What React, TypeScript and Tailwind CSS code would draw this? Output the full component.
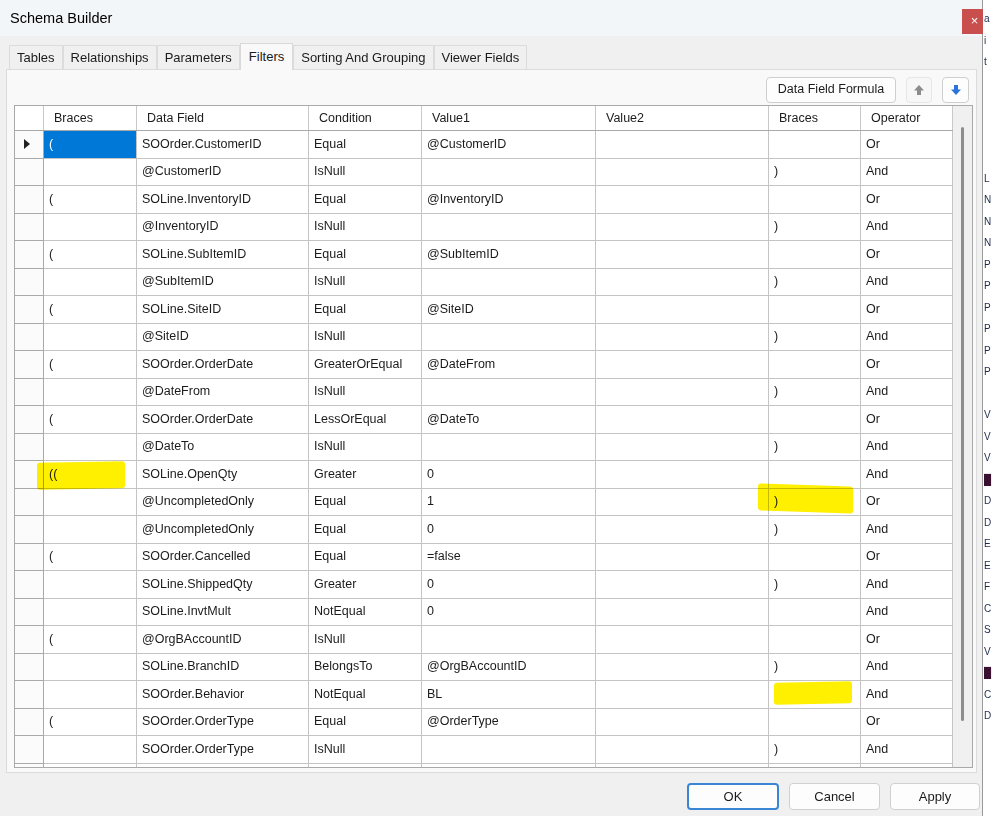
import React from 'react';

type Row = [string, string, string, string, string, string, string];

const ROWS: Row[] = [
  ['(', 'SOOrder.CustomerID', 'Equal', '@CustomerID', '', '', 'Or'],
  ['', '@CustomerID', 'IsNull', '', '', ')', 'And'],
  ['(', 'SOLine.InventoryID', 'Equal', '@InventoryID', '', '', 'Or'],
  ['', '@InventoryID', 'IsNull', '', '', ')', 'And'],
  ['(', 'SOLine.SubItemID', 'Equal', '@SubItemID', '', '', 'Or'],
  ['', '@SubItemID', 'IsNull', '', '', ')', 'And'],
  ['(', 'SOLine.SiteID', 'Equal', '@SiteID', '', '', 'Or'],
  ['', '@SiteID', 'IsNull', '', '', ')', 'And'],
  ['(', 'SOOrder.OrderDate', 'GreaterOrEqual', '@DateFrom', '', '', 'Or'],
  ['', '@DateFrom', 'IsNull', '', '', ')', 'And'],
  ['(', 'SOOrder.OrderDate', 'LessOrEqual', '@DateTo', '', '', 'Or'],
  ['', '@DateTo', 'IsNull', '', '', ')', 'And'],
  ['((', 'SOLine.OpenQty', 'Greater', '0', '', '', 'And'],
  ['', '@UncompletedOnly', 'Equal', '1', '', ')', 'Or'],
  ['', '@UncompletedOnly', 'Equal', '0', '', ')', 'And'],
  ['(', 'SOOrder.Cancelled', 'Equal', '=false', '', '', 'Or'],
  ['', 'SOLine.ShippedQty', 'Greater', '0', '', ')', 'And'],
  ['', 'SOLine.InvtMult', 'NotEqual', '0', '', '', 'And'],
  ['(', '@OrgBAccountID', 'IsNull', '', '', '', 'Or'],
  ['', 'SOLine.BranchID', 'BelongsTo', '@OrgBAccountID', '', ')', 'And'],
  ['', 'SOOrder.Behavior', 'NotEqual', 'BL', '', '', 'And'],
  ['(', 'SOOrder.OrderType', 'Equal', '@OrderType', '', '', 'Or'],
  ['', 'SOOrder.OrderType', 'IsNull', '', '', ')', 'And'],
  ['', '', '', '', '', '', ''],
];

const HEADERS = ['Braces', 'Data Field', 'Condition', 'Value1', 'Value2', 'Braces', 'Operator'];
const COLS = 'grid grid-cols-[29px_93px_172px_113px_174px_173px_92px_92px]';

const TABS = ['Tables', 'Relationships', 'Parameters', 'Filters', 'Sorting And Grouping', 'Viewer Fields'];

// letters of the app window peeking out behind the dialog
const STRIP = ['L', 'N', 'N', 'N', 'P', 'P', 'P', 'P', 'P', 'P', '', 'V', 'V', 'V', '█', 'D', 'D', 'E', 'E', 'F', 'C', 'S', 'V', '█', 'C', 'D'];

const Arrow: React.FC<{ down?: boolean; color: string }> = ({ down, color }) => (
  <svg width="12" height="12" viewBox="0 0 12 12" className={down ? 'rotate-180' : ''}>
    <path d="M6 1 L11 6.5 L8 6.5 L8 11 L4 11 L4 6.5 L1 6.5 Z" fill={color} />
  </svg>
);

const App: React.FC = () => {
  return (
    <div
      className="w-[992px] h-[816px] flex overflow-hidden bg-[#f0f0f0] text-[#1b1b1b]"
      style={{ fontFamily: '"Liberation Sans", Arial, sans-serif' }}
    >
      {/* Dialog window */}
      <div className="w-[983px] h-full flex flex-col border-r border-[#9a9a9a] bg-[#f0f0f0]">
        {/* Title bar */}
        <div className="h-[36px] shrink-0 flex items-center justify-between bg-[#f3f6f9] pl-[10px]">
          <span className="text-[14.5px] text-black mt-[2px]">Schema Builder</span>
          <div className="w-[25px] h-[25px] mt-[6px] bg-[#c94f4f] flex items-center justify-center text-white text-[13px] mr-[-5px]">
            ×
          </div>
        </div>

        {/* Tabs */}
        <div className="flex items-end pl-[9px] h-[33px] shrink-0 pt-[7px]">
          {TABS.map((t) =>
            t === 'Filters' ? (
              <div
                key={t}
                className="h-[27px] px-[8px] mb-[-1px] relative z-10 bg-[#f9f9f9] border border-b-0 border-[#d9d9d9] text-[13px] flex items-start pt-[3px]"
              >
                {t}
              </div>
            ) : (
              <div
                key={t}
                className="h-[24px] px-[7px] bg-[#f0f0f0] border border-b-0 border-[#dcdcdc] text-[13px] flex items-center"
              >
                {t}
              </div>
            )
          )}
        </div>

        {/* Tab panel */}
        <div className="ml-[6px] w-[971px] h-[704px] shrink-0 bg-[#f9f9f9] border border-[#dcdcdc] flex flex-col px-[7px]">
          {/* Toolbar */}
          <div className="h-[35px] shrink-0 flex items-center justify-end gap-[10px] pt-[4px]">
            <button className="h-[26px] w-[130px] rounded-[4px] border border-[#cfcfcf] bg-[#fdfdfd] text-[12.5px]">
              Data Field Formula
            </button>
            <button className="h-[26px] w-[26px] rounded-[4px] border border-[#e6e6e6] bg-[#f7f7f7] flex items-center justify-center">
              <Arrow color="#8c8c8c" />
            </button>
            <button className="h-[26px] w-[27px] rounded-[4px] border border-[#cfcfcf] bg-[#fdfdfd] flex items-center justify-center">
              <Arrow down color="#2b73d8" />
            </button>
          </div>

          {/* Grid */}
          <div className="relative h-[663px] w-[959px] overflow-hidden border border-[#a9a9a9] bg-[#f0f0f0] flex">
            <div className="w-[938px] flex flex-col bg-white">
              <div className={`${COLS} h-[25px] shrink-0 border-b border-[#a9a9a9] bg-white text-[12.5px]`}>
                <div className="border-r border-[#c8c8c8]" />
                {HEADERS.map((h, i) => (
                  <div key={i} className="border-r border-[#c8c8c8] pl-[10px] flex items-center">
                    {h}
                  </div>
                ))}
              </div>
              {ROWS.map((r, ri) => (
                <div key={ri} className={`${COLS} h-[27.5px] shrink-0 text-[12.5px]`}>
                  <div className="border-r border-b border-[#a9a9a9] bg-[#fbfbfb] flex items-center pl-[9px]">
                    {ri === 0 && (
                      <svg width="6" height="10" viewBox="0 0 6 10">
                        <path d="M0 0 L6 5 L0 10 Z" fill="#222" />
                      </svg>
                    )}
                  </div>
                  {r.map((c, ci) => (
                    <div
                      key={ci}
                      className={`border-r border-b border-[#c4c4c4] flex items-center pl-[5px] ${
                        ri === 0 && ci === 0 ? 'bg-[#0078d7] text-white' : ''
                      }`}
                    >
                      {c}
                    </div>
                  ))}
                </div>
              ))}
            </div>
            {/* Scrollbar */}
            <div className="flex-1 bg-[#f0f0f0] flex justify-center pt-[21px]">
              <div className="w-[3px] h-[594px] bg-[#8e8e8e] rounded-full" />
            </div>

            {/* Yellow marker highlights */}
            <div className="absolute left-[22px] top-[356px] w-[88px] h-[27px] bg-[#fff000] mix-blend-multiply rounded-[3px] -skew-y-1" />
            <div className="absolute left-[743px] top-[379px] w-[95px] h-[27px] bg-[#fff000] mix-blend-multiply rounded-[3px] skew-y-[2deg]" />
            <div className="absolute left-[759px] top-[576px] w-[78px] h-[22px] bg-[#fff000] mix-blend-multiply rounded-[3px] -skew-y-1" />
          </div>
        </div>

        {/* Bottom buttons */}
        <div className="flex-1 flex items-start justify-end gap-[10px] pt-[10px] pr-[2px]">
          <button className="h-[27px] w-[92px] rounded-[4px] border-2 border-[#3b86d4] bg-[#fdfdfd] text-[13px]">OK</button>
          <button className="h-[27px] w-[91px] rounded-[4px] border border-[#d0d0d0] bg-[#fdfdfd] text-[13px]">Cancel</button>
          <button className="h-[27px] w-[90px] rounded-[4px] border border-[#d0d0d0] bg-[#fdfdfd] text-[13px]">Apply</button>
        </div>
      </div>

      {/* Background application edge */}
      <div className="flex-1 bg-white overflow-hidden text-[10px] text-[#1d2a4a] leading-[21.5px] pl-[1px]">
        <div className="pt-[8px]">a</div>
        <div>i</div>
        <div>t</div>
        <div className="h-[95px]" />
        {STRIP.map((s, i) => (
          <div key={i} className={s === '█' ? 'text-[#3a1030]' : ''}>
            {s || '\u00a0'}
          </div>
        ))}
      </div>
    </div>
  );
};

export default App;
